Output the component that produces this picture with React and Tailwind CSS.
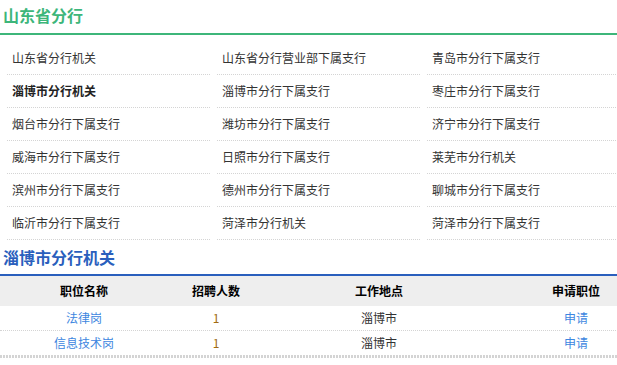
import React from 'react';

const branches = [
  ['山东省分行机关', '山东省分行营业部下属支行', '青岛市分行下属支行'],
  ['淄博市分行机关', '淄博市分行下属支行', '枣庄市分行下属支行'],
  ['烟台市分行下属支行', '潍坊市分行下属支行', '济宁市分行下属支行'],
  ['威海市分行下属支行', '日照市分行下属支行', '莱芜市分行机关'],
  ['滨州市分行下属支行', '德州市分行下属支行', '聊城市分行下属支行'],
  ['临沂市分行下属支行', '菏泽市分行机关', '菏泽市分行下属支行'],
];

const jobs = [
  { name: '法律岗', count: 1, place: '淄博市' },
  { name: '信息技术岗', count: 1, place: '淄博市' },
];

const App = () => {
  return (
    <div
      className="w-[617px] h-[365px] overflow-hidden bg-white text-[12px] text-[#333]"
      style={{ fontFamily: '"Noto Sans CJK SC", "Noto Sans", sans-serif' }}
    >
      <h2 className="h-[33px] pl-[3px] pt-[4px] text-[16px] leading-[22px] font-bold text-[#3db67a]">
        山东省分行
      </h2>
      <div className="h-[2px] bg-[#3db67a]" />

      <div className="w-[630px] pt-[7px]">
        {branches.map((row, i) => (
          <div key={i} className="flex">
            {row.map((name) => (
              <div
                key={name}
                className={
                  'ml-[7px] w-[203px] h-[33px] pl-[5px] leading-[32px] border-b border-dotted border-[#d4d4d4]' +
                  (name === '淄博市分行机关' && i === 1 ? ' font-bold text-[#222]' : '')
                }
              >
                {name}
              </div>
            ))}
          </div>
        ))}
      </div>

      <h2 className="h-[34px] pl-[3px] pt-[6px] text-[16px] leading-[22px] font-bold text-[#2a5fbd]">
        淄博市分行机关
      </h2>
      <div className="h-[2px] bg-[#2a5fbd]" />

      <div className="w-[658px]">
        <div className="flex h-[30px] items-center bg-[#eeeeee] font-bold text-black">
          <div className="w-[168px] text-center">职位名称</div>
          <div className="w-[96px] text-center">招聘人数</div>
          <div className="w-[230px] text-center">工作地点</div>
          <div className="w-[164px] text-center">申请职位</div>
        </div>
        {jobs.map((job, i) => (
          <div
            key={job.name}
            className={
              i === jobs.length - 1
                ? 'flex h-[24px] items-center'
                : 'flex h-[25px] items-center border-b border-dotted border-[#d4d4d4]'
            }
          >
            <div className="w-[168px] text-center text-[#3d86e0]">{job.name}</div>
            <div className="w-[96px] text-center text-[#a06a12]">{job.count}</div>
            <div className="w-[230px] text-center text-[#333]">{job.place}</div>
            <div className="w-[164px] text-center text-[#3d86e0]">申请</div>
          </div>
        ))}
        <div className="h-[3px] bg-[repeating-linear-gradient(90deg,#d4d4d4_0_2px,transparent_2px_3px)]" />
      </div>
    </div>
  );
};

export default App;
